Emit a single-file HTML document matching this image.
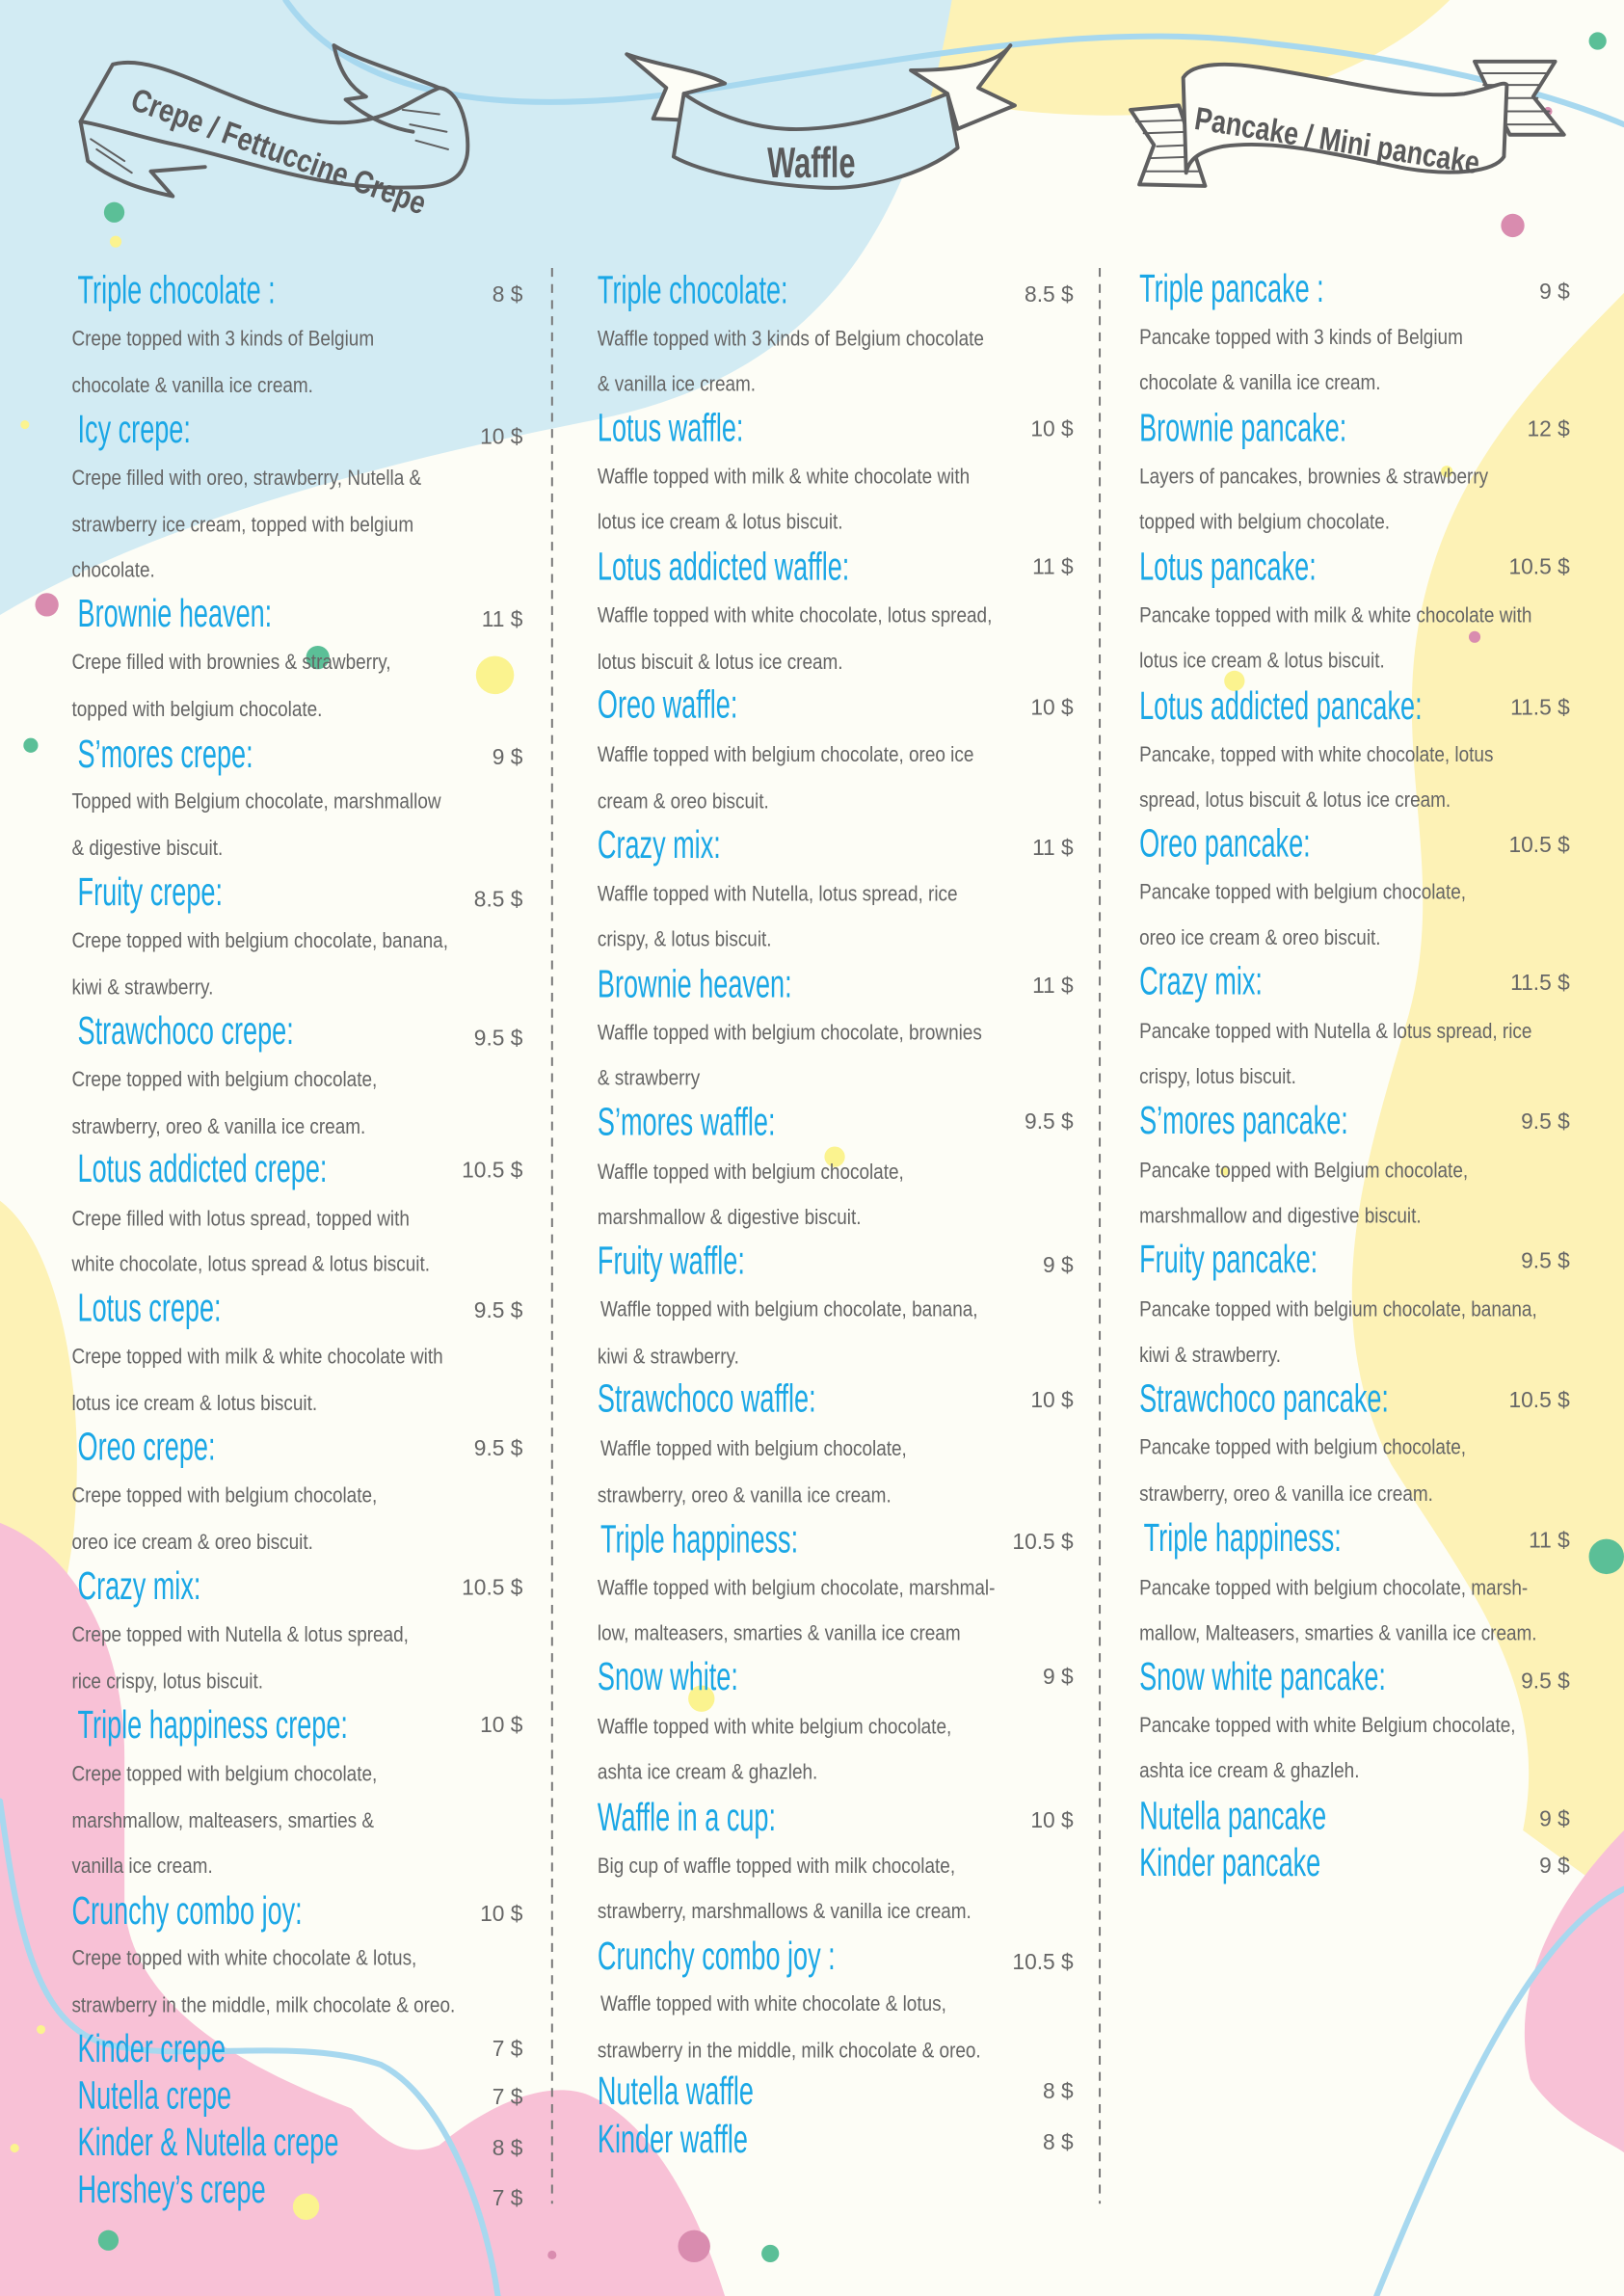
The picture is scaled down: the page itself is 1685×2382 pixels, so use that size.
<!DOCTYPE html>
<html><head><meta charset="utf-8"><style>
html,body{margin:0;padding:0;background:#fdfdf6;}
svg{display:block}
.t{font-family:"Liberation Sans",sans-serif;font-size:27px;fill:#1aa7e6}
.d{font-family:"Liberation Sans",sans-serif;font-size:14.5px;fill:#656565}
.p{font-family:"Liberation Sans",sans-serif;font-size:15px;fill:#666;text-anchor:end}
.b{font-family:"Liberation Sans",sans-serif;fill:#5a5a5b}
</style></head><body>
<svg width="1685" height="2382" viewBox="0 0 1109 1568" preserveAspectRatio="none" xmlns="http://www.w3.org/2000/svg">
<rect width="1109" height="1568" fill="#fdfdf6"/>
<path d="M470,0 C560,60 700,90 820,75 C920,60 970,20 990,0 Z" fill="#fdf2b6"/>
<path d="M0,0 H650 C620,180 540,262 400,288 C250,318 100,360 0,420 Z" fill="#d2ebf3"/>
<path d="M1109,200 C1050,260 990,320 970,420 C950,520 990,600 960,700 C930,800 900,900 950,1000 C1000,1080 1060,1150 1040,1250 L1109,1300 Z" fill="#fdf2b6"/>
<path d="M1109,1250 C1060,1300 1030,1360 1045,1420 C1065,1450 1095,1460 1109,1470 Z" fill="#f8c1d6"/>
<path d="M0,820 C40,850 60,950 50,1050 C40,1120 20,1180 0,1200 Z" fill="#fdf2b6"/>
<path d="M0,1040 C50,1060 85,1120 85,1200 L85,1300 C90,1380 190,1420 240,1440 C260,1460 275,1475 300,1465 C330,1440 370,1420 400,1430 C450,1450 480,1520 495,1568 L0,1568 Z" fill="#f8c1d6"/>
<g fill="none" stroke="#a7d8ef" stroke-width="4" stroke-linecap="round">
<path d="M195,0 C250,80 380,80 520,55 C650,35 760,15 870,30 C960,40 1050,60 1109,85"/>
<path d="M0,1230 C10,1300 20,1380 70,1395 C120,1410 200,1390 260,1410 C300,1430 330,1500 340,1568"/>
<path d="M1109,1290 C1050,1320 1000,1420 940,1568"/>
</g>
<g>
<circle cx="1091" cy="28" r="6" fill="#5bbf97"/><circle cx="78" cy="145" r="7" fill="#5bbf97"/>
<circle cx="79" cy="165" r="4" fill="#fbf38f"/><circle cx="82" cy="48" r="6" fill="#d98caf"/>
<circle cx="1033" cy="154" r="8" fill="#d98caf"/><circle cx="17" cy="290" r="3" fill="#fbf38f"/>
<circle cx="32" cy="413" r="8" fill="#d98caf"/><circle cx="217" cy="449" r="8" fill="#5bbf97"/>
<circle cx="338" cy="461" r="13" fill="#fbf38f"/><circle cx="21" cy="509" r="5" fill="#5bbf97"/>
<circle cx="843" cy="465" r="7" fill="#fbf38f"/><circle cx="1007" cy="435" r="4" fill="#d98caf"/>
<circle cx="570" cy="790" r="7" fill="#fbf38f"/><circle cx="988" cy="322" r="4" fill="#fbf38f"/>
<circle cx="836" cy="800" r="3" fill="#fbf38f"/><circle cx="1097" cy="1063" r="12" fill="#5bbf97"/>
<circle cx="479" cy="1160" r="9" fill="#fbf38f"/><circle cx="209" cy="1507" r="9" fill="#fbf38f"/>
<circle cx="74" cy="1530" r="7" fill="#5bbf97"/><circle cx="474" cy="1534" r="11" fill="#d98caf"/>
<circle cx="526" cy="1539" r="6" fill="#5bbf97"/><circle cx="377" cy="1540" r="3" fill="#d98caf"/>
<circle cx="28" cy="1386" r="3" fill="#fbf38f"/><circle cx="10" cy="1467" r="3" fill="#fbf38f"/>
<circle cx="1057" cy="76" r="3" fill="#d98caf"/>
</g>
<g fill="none" stroke="#5f5f60" stroke-width="2.6" stroke-linejoin="round" stroke-linecap="round">
<path d="M55,83 L77,44 C110,35 160,75 219,83 C260,88 280,68 300,60 C318,62 322,100 318,110 C314,125 300,128 280,128 C220,130 170,110 121,99 C100,95 70,85 55,83 Z" fill="#d2ebf3"/>
<path d="M55,83 L60,110 C80,125 100,130 118,134 L103,117 L140,114"/>
<path d="M300,60 C270,48 242,40 228,31 C232,50 240,60 250,66 L236,68 C252,82 270,88 282,90"/>
<path d="M62,95 L85,110 M66,102 L90,118 M275,75 L300,78 M280,85 L305,90 M284,96 L306,102" stroke-width="1.3"/>
<path d="M428,37 C450,45 480,48 495,57 L467,64 L467,82 L446,81 L455,60 Z" fill="#fdfdf6"/>
<path d="M690,31 C680,45 650,48 622,48 L647,64 L654,88 L693,72 L668,60 Z" fill="#fdfdf6"/>
<path d="M467,64 C490,80 520,90 552,88 C590,86 620,75 647,64 L654,101 C630,120 590,130 559,128 C520,126 480,118 460,107 Z" fill="#d2ebf3"/>
<path d="M772,75 L805,72 L823,127 L778,126 L788,99 Z" fill="#fdfdf6"/>
<path d="M1007,42 L1062,42 L1047,66 L1068,92 L1031,92 Z" fill="#fdfdf6"/>
<path d="M776,83 L810,82 M781,91 L812,90 M790,100 L815,99 M786,108 L818,107 M782,117 L820,117 M1010,50 L1057,50 M1013,58 L1052,58 M1020,67 L1050,67 M1020,76 L1058,76 M1020,85 L1062,85" stroke-width="1.3"/>
<path d="M808,53 C815,42 840,43 860,46 C920,55 960,68 1000,64 C1020,60 1027,55 1029,58 L1027,107 C1020,118 990,120 960,115 C910,105 870,95 835,100 C820,103 812,108 810,118 Z" fill="#fdfdf6"/>
</g>
<text class="b" font-size="22" font-weight="bold" transform="translate(88,74) rotate(20) scale(0.82,1)">Crepe / Fettuccine Crepe</text>
<text class="b" font-size="29" font-weight="bold" transform="translate(524,121) scale(0.7,1)">Waffle</text>
<text class="b" font-size="22" font-weight="bold" transform="translate(815,88) rotate(9) scale(0.8,1)">Pancake / Mini pancake</text>
<g stroke="#777" stroke-width="1.3" stroke-dasharray="6,5">
<line x1="377" y1="183" x2="377" y2="1505"/><line x1="751" y1="183" x2="751" y2="1505"/>
</g>
<g>
<text class="t" transform="translate(53,207) scale(0.66,1)">Triple chocolate :</text><text class="p" x="357" y="206">8 $</text>
<text class="d" transform="translate(49,236) scale(0.86,1)">Crepe topped with 3 kinds of Belgium</text>
<text class="d" transform="translate(49,268) scale(0.86,1)">chocolate &amp; vanilla ice cream.</text>
<text class="t" transform="translate(53,302) scale(0.66,1)">Icy crepe:</text><text class="p" x="357" y="303">10 $</text>
<text class="d" transform="translate(49,331) scale(0.86,1)">Crepe filled with oreo, strawberry, Nutella &amp;</text>
<text class="d" transform="translate(49,363) scale(0.86,1)">strawberry ice cream, topped with belgium</text>
<text class="d" transform="translate(49,394) scale(0.86,1)">chocolate.</text>
<text class="t" transform="translate(53,428) scale(0.66,1)">Brownie heaven:</text><text class="p" x="357" y="428">11 $</text>
<text class="d" transform="translate(49,457) scale(0.86,1)">Crepe filled with brownies &amp; strawberry,</text>
<text class="d" transform="translate(49,489) scale(0.86,1)">topped with belgium chocolate.</text>
<text class="t" transform="translate(53,524) scale(0.66,1)">S’mores crepe:</text><text class="p" x="357" y="522">9 $</text>
<text class="d" transform="translate(49,552) scale(0.86,1)">Topped with Belgium chocolate, marshmallow</text>
<text class="d" transform="translate(49,584) scale(0.86,1)">&amp; digestive biscuit.</text>
<text class="t" transform="translate(53,618) scale(0.66,1)">Fruity crepe:</text><text class="p" x="357" y="619">8.5 $</text>
<text class="d" transform="translate(49,647) scale(0.86,1)">Crepe topped with belgium chocolate, banana,</text>
<text class="d" transform="translate(49,679) scale(0.86,1)">kiwi &amp; strawberry.</text>
<text class="t" transform="translate(53,713) scale(0.66,1)">Strawchoco crepe:</text><text class="p" x="357" y="714">9.5 $</text>
<text class="d" transform="translate(49,742) scale(0.86,1)">Crepe topped with belgium chocolate,</text>
<text class="d" transform="translate(49,774) scale(0.86,1)">strawberry, oreo &amp; vanilla ice cream.</text>
<text class="t" transform="translate(53,807) scale(0.66,1)">Lotus addicted crepe:</text><text class="p" x="357" y="804">10.5 $</text>
<text class="d" transform="translate(49,837) scale(0.86,1)">Crepe filled with lotus spread, topped with</text>
<text class="d" transform="translate(49,868) scale(0.86,1)">white chocolate, lotus spread &amp; lotus biscuit.</text>
<text class="t" transform="translate(53,902) scale(0.66,1)">Lotus crepe:</text><text class="p" x="357" y="900">9.5 $</text>
<text class="d" transform="translate(49,931) scale(0.86,1)">Crepe topped with milk &amp; white chocolate with</text>
<text class="d" transform="translate(49,963) scale(0.86,1)">lotus ice cream &amp; lotus biscuit.</text>
<text class="t" transform="translate(53,997) scale(0.66,1)">Oreo crepe:</text><text class="p" x="357" y="994">9.5 $</text>
<text class="d" transform="translate(49,1026) scale(0.86,1)">Crepe topped with belgium chocolate,</text>
<text class="d" transform="translate(49,1058) scale(0.86,1)">oreo ice cream &amp; oreo biscuit.</text>
<text class="t" transform="translate(53,1092) scale(0.66,1)">Crazy mix:</text><text class="p" x="357" y="1089">10.5 $</text>
<text class="d" transform="translate(49,1121) scale(0.86,1)">Crepe topped with Nutella &amp; lotus spread,</text>
<text class="d" transform="translate(49,1153) scale(0.86,1)">rice crispy, lotus biscuit.</text>
<text class="t" transform="translate(53,1187) scale(0.66,1)">Triple happiness crepe:</text><text class="p" x="357" y="1183">10 $</text>
<text class="d" transform="translate(49,1216) scale(0.86,1)">Crepe topped with belgium chocolate,</text>
<text class="d" transform="translate(49,1248) scale(0.86,1)">marshmallow, malteasers,  smarties &amp;</text>
<text class="d" transform="translate(49,1279) scale(0.86,1)">vanilla ice cream.</text>
<text class="t" transform="translate(49,1314) scale(0.66,1)">Crunchy combo joy:</text><text class="p" x="357" y="1312">10 $</text>
<text class="d" transform="translate(49,1342) scale(0.86,1)">Crepe topped with white chocolate &amp; lotus,</text>
<text class="d" transform="translate(49,1374) scale(0.86,1)">strawberry in the middle, milk chocolate &amp; oreo.</text>
<text class="t" transform="translate(53,1408) scale(0.66,1)">Kinder crepe</text><text class="p" x="357" y="1404">7 $</text>
<text class="t" transform="translate(53,1440) scale(0.66,1)">Nutella crepe</text><text class="p" x="357" y="1437">7 $</text>
<text class="t" transform="translate(53,1472) scale(0.66,1)">Kinder &amp; Nutella crepe</text><text class="p" x="357" y="1472">8 $</text>
<text class="t" transform="translate(53,1504) scale(0.66,1)">Hershey’s crepe</text><text class="p" x="357" y="1506">7 $</text>
</g>
<g>
<text class="t" transform="translate(408,207) scale(0.66,1)">Triple chocolate:</text><text class="p" x="733" y="206">8.5 $</text>
<text class="d" transform="translate(408,236) scale(0.86,1)">Waffle topped with 3 kinds of Belgium chocolate</text>
<text class="d" transform="translate(408,267) scale(0.86,1)">&amp; vanilla ice cream.</text>
<text class="t" transform="translate(408,301) scale(0.66,1)">Lotus waffle:</text><text class="p" x="733" y="298">10 $</text>
<text class="d" transform="translate(408,330) scale(0.86,1)">Waffle topped with milk &amp; white chocolate with</text>
<text class="d" transform="translate(408,361) scale(0.86,1)">lotus ice cream &amp; lotus biscuit.</text>
<text class="t" transform="translate(408,396) scale(0.66,1)">Lotus addicted waffle:</text><text class="p" x="733" y="392">11 $</text>
<text class="d" transform="translate(408,425) scale(0.86,1)">Waffle topped with white chocolate, lotus spread,</text>
<text class="d" transform="translate(408,457) scale(0.86,1)">lotus biscuit &amp; lotus ice cream.</text>
<text class="t" transform="translate(408,490) scale(0.66,1)">Oreo waffle:</text><text class="p" x="733" y="488">10 $</text>
<text class="d" transform="translate(408,520) scale(0.86,1)">Waffle topped with belgium chocolate, oreo ice</text>
<text class="d" transform="translate(408,552) scale(0.86,1)">cream &amp; oreo biscuit.</text>
<text class="t" transform="translate(408,586) scale(0.66,1)">Crazy mix:</text><text class="p" x="733" y="584">11 $</text>
<text class="d" transform="translate(408,615) scale(0.86,1)">Waffle topped with Nutella, lotus spread, rice</text>
<text class="d" transform="translate(408,646) scale(0.86,1)">crispy, &amp; lotus biscuit.</text>
<text class="t" transform="translate(408,681) scale(0.66,1)">Brownie heaven:</text><text class="p" x="733" y="678">11 $</text>
<text class="d" transform="translate(408,710) scale(0.86,1)">Waffle topped with belgium chocolate, brownies</text>
<text class="d" transform="translate(408,741) scale(0.86,1)">&amp; strawberry</text>
<text class="t" transform="translate(408,775) scale(0.66,1)">S’mores waffle:</text><text class="p" x="733" y="771">9.5 $</text>
<text class="d" transform="translate(408,805) scale(0.86,1)">Waffle topped with belgium chocolate,</text>
<text class="d" transform="translate(408,836) scale(0.86,1)">marshmallow &amp; digestive biscuit.</text>
<text class="t" transform="translate(408,870) scale(0.66,1)">Fruity waffle:</text><text class="p" x="733" y="869">9 $</text>
<text class="d" transform="translate(410,899) scale(0.86,1)">Waffle topped with belgium chocolate, banana,</text>
<text class="d" transform="translate(408,931) scale(0.86,1)">kiwi &amp; strawberry.</text>
<text class="t" transform="translate(408,964) scale(0.66,1)">Strawchoco waffle:</text><text class="p" x="733" y="961">10 $</text>
<text class="d" transform="translate(410,994) scale(0.86,1)">Waffle topped with belgium chocolate,</text>
<text class="d" transform="translate(408,1026) scale(0.86,1)">strawberry, oreo &amp; vanilla ice cream.</text>
<text class="t" transform="translate(410,1060) scale(0.66,1)">Triple happiness:</text><text class="p" x="733" y="1058">10.5 $</text>
<text class="d" transform="translate(408,1089) scale(0.86,1)">Waffle topped with belgium chocolate, marshmal-</text>
<text class="d" transform="translate(408,1120) scale(0.86,1)">low, malteasers, smarties &amp; vanilla ice cream</text>
<text class="t" transform="translate(408,1154) scale(0.66,1)">Snow white:</text><text class="p" x="733" y="1150">9 $</text>
<text class="d" transform="translate(408,1184) scale(0.86,1)">Waffle topped with white belgium chocolate,</text>
<text class="d" transform="translate(408,1215) scale(0.86,1)">ashta ice cream &amp; ghazleh.</text>
<text class="t" transform="translate(408,1250) scale(0.66,1)">Waffle in a cup:</text><text class="p" x="733" y="1248">10 $</text>
<text class="d" transform="translate(408,1279) scale(0.86,1)">Big cup of waffle topped with milk chocolate,</text>
<text class="d" transform="translate(408,1310) scale(0.86,1)">strawberry, marshmallows &amp; vanilla ice cream.</text>
<text class="t" transform="translate(408,1345) scale(0.66,1)">Crunchy combo joy :</text><text class="p" x="733" y="1345">10.5 $</text>
<text class="d" transform="translate(410,1373) scale(0.86,1)">Waffle topped with white chocolate &amp; lotus,</text>
<text class="d" transform="translate(408,1405) scale(0.86,1)">strawberry in the middle, milk chocolate &amp; oreo.</text>
<text class="t" transform="translate(408,1437) scale(0.66,1)">Nutella waffle</text><text class="p" x="733" y="1433">8 $</text>
<text class="t" transform="translate(408,1470) scale(0.66,1)">Kinder waffle</text><text class="p" x="733" y="1468">8 $</text>
</g>
<g>
<text class="t" transform="translate(778,206) scale(0.66,1)">Triple pancake :</text><text class="p" x="1072" y="204">9 $</text>
<text class="d" transform="translate(778,235) scale(0.86,1)">Pancake topped with 3 kinds of Belgium</text>
<text class="d" transform="translate(778,266) scale(0.86,1)">chocolate &amp; vanilla ice cream.</text>
<text class="t" transform="translate(778,301) scale(0.66,1)">Brownie pancake:</text><text class="p" x="1072" y="298">12 $</text>
<text class="d" transform="translate(778,330) scale(0.86,1)">Layers of pancakes, brownies &amp; strawberry</text>
<text class="d" transform="translate(778,361) scale(0.86,1)">topped with belgium chocolate.</text>
<text class="t" transform="translate(778,396) scale(0.66,1)">Lotus pancake:</text><text class="p" x="1072" y="392">10.5 $</text>
<text class="d" transform="translate(778,425) scale(0.86,1)">Pancake topped with milk &amp; white chocolate with</text>
<text class="d" transform="translate(778,456) scale(0.86,1)">lotus ice cream &amp; lotus biscuit.</text>
<text class="t" transform="translate(778,491) scale(0.66,1)">Lotus addicted pancake:</text><text class="p" x="1072" y="488">11.5 $</text>
<text class="d" transform="translate(778,520) scale(0.86,1)">Pancake, topped with white chocolate, lotus</text>
<text class="d" transform="translate(778,551) scale(0.86,1)">spread, lotus biscuit &amp; lotus ice cream.</text>
<text class="t" transform="translate(778,585) scale(0.66,1)">Oreo pancake:</text><text class="p" x="1072" y="582">10.5 $</text>
<text class="d" transform="translate(778,614) scale(0.86,1)">Pancake topped with belgium chocolate,</text>
<text class="d" transform="translate(778,645) scale(0.86,1)">oreo ice cream &amp; oreo biscuit.</text>
<text class="t" transform="translate(778,679) scale(0.66,1)">Crazy mix:</text><text class="p" x="1072" y="676">11.5 $</text>
<text class="d" transform="translate(778,709) scale(0.86,1)">Pancake topped with Nutella &amp; lotus spread, rice</text>
<text class="d" transform="translate(778,740) scale(0.86,1)">crispy, lotus biscuit.</text>
<text class="t" transform="translate(778,774) scale(0.66,1)">S’mores pancake:</text><text class="p" x="1072" y="771">9.5 $</text>
<text class="d" transform="translate(778,804) scale(0.86,1)">Pancake topped with Belgium chocolate,</text>
<text class="d" transform="translate(778,835) scale(0.86,1)">marshmallow and digestive biscuit.</text>
<text class="t" transform="translate(778,869) scale(0.66,1)">Fruity pancake:</text><text class="p" x="1072" y="866">9.5 $</text>
<text class="d" transform="translate(778,899) scale(0.86,1)">Pancake topped with belgium chocolate, banana,</text>
<text class="d" transform="translate(778,930) scale(0.86,1)">kiwi &amp; strawberry.</text>
<text class="t" transform="translate(778,964) scale(0.66,1)">Strawchoco pancake:</text><text class="p" x="1072" y="961">10.5 $</text>
<text class="d" transform="translate(778,993) scale(0.86,1)">Pancake topped with belgium chocolate,</text>
<text class="d" transform="translate(778,1025) scale(0.86,1)">strawberry, oreo &amp; vanilla ice cream.</text>
<text class="t" transform="translate(781,1059) scale(0.66,1)">Triple happiness:</text><text class="p" x="1072" y="1057">11 $</text>
<text class="d" transform="translate(778,1089) scale(0.86,1)">Pancake topped with belgium chocolate, marsh-</text>
<text class="d" transform="translate(778,1120) scale(0.86,1)">mallow, Malteasers, smarties &amp; vanilla ice cream.</text>
<text class="t" transform="translate(778,1154) scale(0.66,1)">Snow white pancake:</text><text class="p" x="1072" y="1153">9.5 $</text>
<text class="d" transform="translate(778,1183) scale(0.86,1)">Pancake topped with white Belgium chocolate,</text>
<text class="d" transform="translate(778,1214) scale(0.86,1)">ashta ice cream &amp; ghazleh.</text>
<text class="t" transform="translate(778,1249) scale(0.66,1)">Nutella pancake</text><text class="p" x="1072" y="1247">9 $</text>
<text class="t" transform="translate(778,1281) scale(0.66,1)">Kinder pancake</text><text class="p" x="1072" y="1279">9 $</text>
</g>
</svg>
</body></html>
